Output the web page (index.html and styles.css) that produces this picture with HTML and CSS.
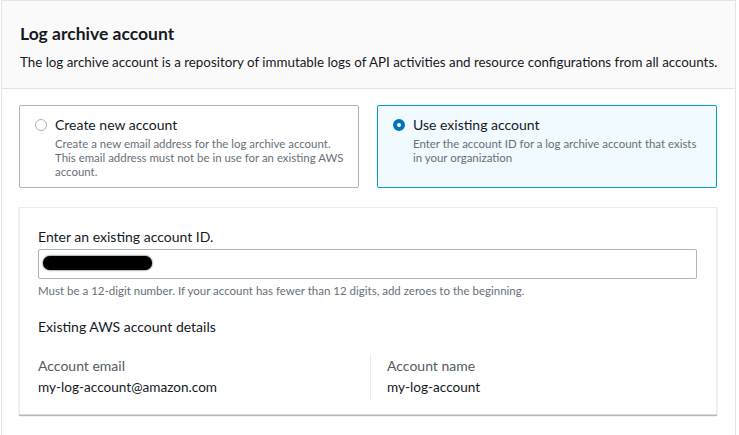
FILE: index.html
```html
<!DOCTYPE html>
<html lang="en">

<head>
    <meta charset="UTF-8">
    <meta name="viewport" content="width=device-width, initial-scale=1.0">
    <title>Log archive account</title>
    <link rel="stylesheet" href="styles.css">
</head>

<body>
    <div class="panel">
        <div class="panel-header">
            <h2>Log archive account</h2>
            <p>The log archive account is a repository of immutable logs of API activities and resource configurations from all accounts.</p>
        </div>

        <div class="panel-body">
            <div class="choices">
                <label class="choice">
                    <span class="radio"></span>
                    <span class="choice-text">
                        <span class="choice-title">Create new account</span>
                        <span class="choice-desc">Create a new email address for the log archive account. This email address must not be in use for an existing AWS account.</span>
                    </span>
                </label>
                <label class="choice selected">
                    <span class="radio checked"></span>
                    <span class="choice-text">
                        <span class="choice-title">Use existing account</span>
                        <span class="choice-desc">Enter the account ID for a log archive account that exists in your organization</span>
                    </span>
                </label>
            </div>

            <div class="box">
                <div class="field-label">Enter an existing account ID.</div>
                <div class="input"><span class="redacted"></span></div>
                <div class="hint">Must be a 12-digit number. If your account has fewer than 12 digits, add zeroes to the beginning.</div>

                <div class="details-title">Existing AWS account details</div>
                <div class="details">
                    <div class="detail">
                        <div class="detail-key">Account email</div>
                        <div class="detail-value">my-log-account@amazon.com</div>
                    </div>
                    <div class="detail">
                        <div class="detail-key">Account name</div>
                        <div class="detail-value">my-log-account</div>
                    </div>
                </div>
            </div>
        </div>
    </div>
</body>

</html>
```

FILE: styles.css
```css
body {
    font-family: Lato, "Liberation Sans", Arial, sans-serif;
    margin: 0;
    color: #16191f;
    background: #fff;
}

.panel {
    margin-left: 1px;
    width: 733px;
    height: 440px;
    border: 1px solid #e3e5e5;
    border-bottom: none;
}

.panel-header {
    background-color: #fafafa;
    border-bottom: 1px solid #e3e5e5;
    padding: 21px 18px 0;
    height: 66px;
}

.panel-header h2 {
    margin: 0;
    font-size: 17.5px;
    line-height: 24px;
    font-weight: 700;
}

.panel-header p {
    margin: 6px 0 0;
    font-size: 13.35px;
    line-height: 20px;
    white-space: nowrap;
}

.panel-body {
    padding: 16px 17px 0;
}

.choices {
    display: flex;
    gap: 18px;
}

.choice {
    width: 340px;
    height: 83px;
    box-sizing: border-box;
    border: 1px solid #aab7b8;
    border-radius: 2px;
    padding: 10px 8px 10px 15px;
    display: flex;
    gap: 8px;
}

.choice.selected {
    border-color: #00a1c9;
    background-color: #f1faff;
}

.radio {
    flex: none;
    width: 12px;
    height: 12px;
    margin-top: 3px;
    box-sizing: border-box;
    border: 1px solid #aab7b8;
    border-radius: 50%;
    background: #fff;
}

.radio.checked {
    border: 4px solid #0073bb;
}

.choice-text {
    display: flex;
    flex-direction: column;
}

.choice-title {
    font-size: 14px;
    line-height: 18px;
}

.choice-desc {
    margin-top: 3px;
    font-size: 11.45px;
    line-height: 14px;
    color: #687078;
}

.box {
    margin-top: 19px;
    width: 698px;
    height: 208px;
    box-sizing: border-box;
    border: 1px solid #eaeded;
    border-bottom: 1px solid #d5dbdb;
    box-shadow: 0 1px 1px rgba(0, 28, 36, 0.3);
    padding: 19px 19px 0 18px;
}

.field-label {
    font-size: 14px;
    line-height: 20px;
}

.input {
    margin-top: 2px;
    height: 30px;
    box-sizing: border-box;
    border: 1px solid #aab7b8;
    border-radius: 2px;
    padding: 6px 4px;
}

.redacted {
    display: block;
    width: 109px;
    height: 14px;
    border-radius: 7px;
    background: #000;
    box-shadow: 0 0 2px #000;
}

.hint {
    margin-top: 4px;
    font-size: 11.5px;
    line-height: 16px;
    color: #687078;
}

.details-title {
    margin-top: 18px;
    font-size: 14px;
    line-height: 20px;
}

.details {
    margin-top: 17px;
    display: flex;
}

.detail {
    flex: none;
    width: 332px;
    padding: 2px 0 4px;
}

.detail + .detail {
    flex: 1;
    width: auto;
    border-left: 1px solid #eaeded;
    padding-left: 16px;
}

.detail-key {
    font-size: 14px;
    line-height: 20px;
    color: #545b64;
}

.detail-value {
    margin-top: 1px;
    font-size: 13.6px;
    line-height: 20px;
}
```
